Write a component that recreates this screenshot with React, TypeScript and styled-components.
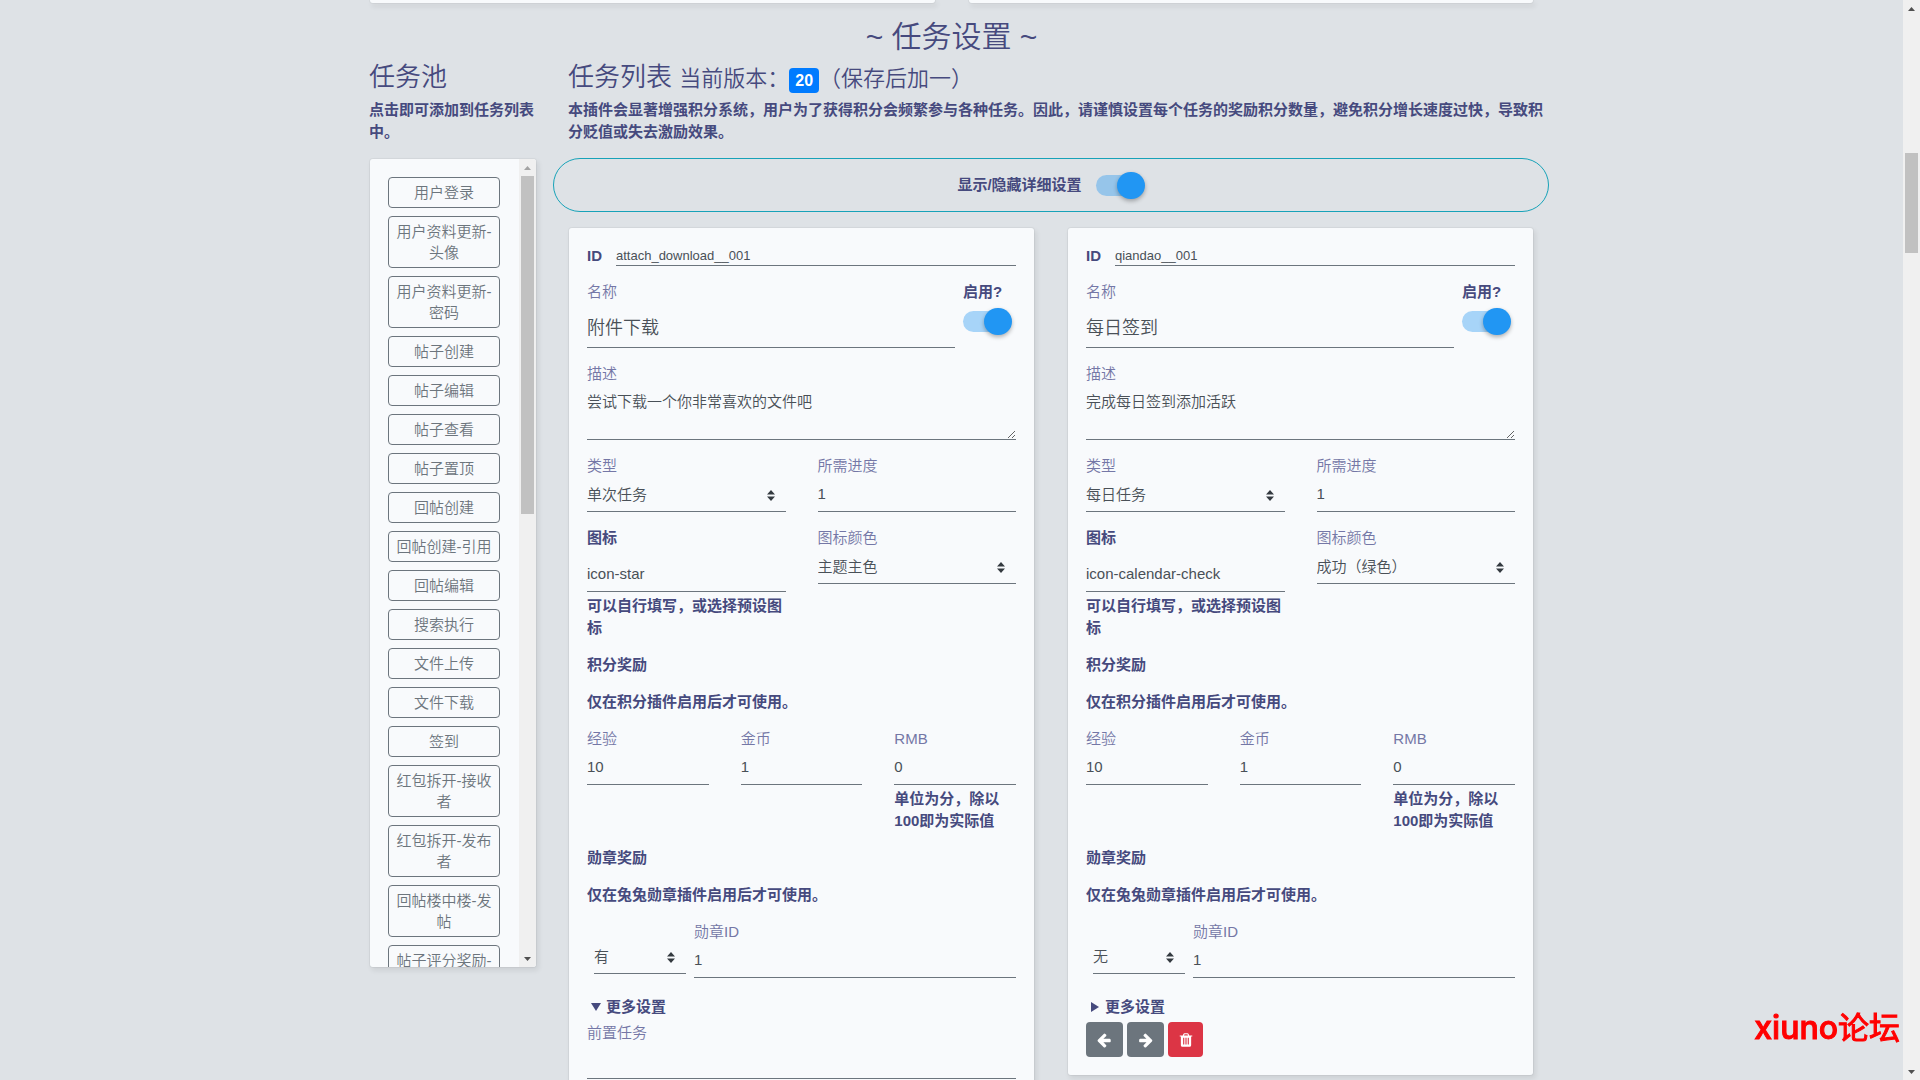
import React, { useId } from "react";
import styled, { createGlobalStyle, css } from "styled-components";

const color = {
  page: "#dee2e6",
  card: "#f8fafc",
  ink: "#464a7e",
  label: "#7477a6",
  field: "#495057",
  line: "#6c757d",
  info: "#17a2b8",
  primary: "#007bff",
  danger: "#dc3545",
  toggle: "#2196f3",
};

const GlobalStyle = createGlobalStyle`
  *, *::before, *::after { box-sizing: border-box; }
  body {
    margin: 0;
    background: ${color.page};
    color: ${color.ink};
    font-family: "Liberation Sans", "Noto Sans CJK SC", sans-serif;
    font-size: 15px;
    font-weight: 350;
    line-height: 22px;
  }
  button, input, select, textarea { font: inherit; color: inherit; }
  h2, h3, p { margin: 0; font-weight: 350; }
`;

/* ---------- page frame ---------- */

const Shell = styled.div`
  display: flex;
  height: 100vh;
  overflow: hidden;
`;

const Main = styled.main`
  flex: 1;
  min-width: 0;
  overflow: hidden;
`;

const Container = styled.div`
  max-width: 1165px;
  margin: 0 auto;
`;

const surface = css`
  background: ${color.card};
  border: 1px solid rgba(0, 0, 0, 0.04);
  background-clip: padding-box;
  border-radius: 4px;
  box-shadow: 2px 3px 5px rgba(0, 0, 0, 0.07);
`;

const PreviousPanels = styled.div`
  display: grid;
  grid-template-columns: 1fr 1fr;
  gap: 32px;
`;

const PanelEdge = styled.div`
  ${surface}
  height: 4px;
  border-top: 0;
  border-radius: 0 0 4px 4px;
`;

const PageTitle = styled.h2`
  margin: 15px 0 7px;
  font-size: 30px;
  line-height: 36px;
  text-align: center;
`;

const Columns = styled.div`
  display: grid;
  grid-template-columns: 168px minmax(0, 1fr);
  gap: 31px;
  align-items: start;
`;

const ColumnTitle = styled.h3`
  height: 30px;
  margin-bottom: 7px;
  font-size: 26px;
  line-height: 30px;
  white-space: nowrap;
`;

const Version = styled.small`
  font-size: 22px;
`;

const Badge = styled.span`
  display: inline-block;
  padding: 0 6px;
  border-radius: 4px;
  background: ${color.primary};
  color: #fff;
  font-size: 16px;
  font-weight: 700;
  line-height: 25px;
`;

const Intro = styled.p<{ $wide?: boolean }>`
  margin-bottom: 15px;
  margin-right: ${(p) => (p.$wide ? "-15px" : "0")};
  font-weight: 700;
`;

/* ---------- scroll bar ---------- */

const Track = styled.div`
  display: flex;
  flex-direction: column;
  flex: none;
  width: 17px;
  background: #f0f0f0;
`;

const ArrowCell = styled.div<{ $dim?: boolean }>`
  display: flex;
  align-items: center;
  justify-content: center;
  height: 17px;
  color: ${(p) => (p.$dim ? "#a3a3a3" : "#505050")};
`;

const Rail = styled.div`
  display: flex;
  flex-direction: column;
  flex: 1;
  padding: 0 2px;
`;

const RailSpace = styled.div<{ $part: number }>`
  flex: ${(p) => p.$part} 1 0;
`;

const Thumb = styled(RailSpace)`
  background: #c1c1c1;
`;

function ScrollBar({ before, size, after }: { before: number; size: number; after: number }) {
  return (
    <Track aria-hidden="true">
      <ArrowCell $dim={before === 0}>
        <svg width="7" height="4" viewBox="0 0 7 4" fill="currentColor">
          <path d="M0 4h7L3.500 0z" />
        </svg>
      </ArrowCell>
      <Rail>
        <RailSpace $part={before} />
        <Thumb $part={size} />
        <RailSpace $part={after} />
      </Rail>
      <ArrowCell>
        <svg width="7" height="4" viewBox="0 0 7 4" fill="currentColor">
          <path d="M0 0h7L3.500 4z" />
        </svg>
      </ArrowCell>
    </Track>
  );
}

/* ---------- task pool ---------- */

const Pool = styled.div`
  ${surface}
  display: flex;
  height: 75vh;
  overflow: hidden;
`;

const PoolList = styled.div`
  display: flex;
  flex: 1;
  flex-direction: column;
  gap: 8px;
  min-width: 0;
  padding: 18px 19px 0 18px;
  overflow: hidden;
`;

const PoolButton = styled.button`
  flex: none;
  padding: 4px 7px;
  border: 1px solid ${color.line};
  border-radius: 4px;
  background: transparent;
  color: ${color.line};
  line-height: 21px;
  cursor: pointer;
`;

/* ---------- switch ---------- */

const Toggle = styled.input`
  appearance: none;
  display: grid;
  align-items: center;
  width: 49px;
  height: 27px;
  margin: 0;
  cursor: pointer;

  &::before,
  &::after {
    content: "";
    grid-area: 1 / 1;
    border-radius: 14px;
  }
  &::before {
    width: 42px;
    height: 21px;
    background: rgba(0, 0, 0, 0.2);
  }
  &::after {
    width: 28px;
    height: 27px;
    background: #fafafa;
    box-shadow: 0 2px 4px rgba(0, 0, 0, 0.3);
  }
  &:checked::before {
    background: rgba(33, 150, 243, 0.38);
  }
  &:checked::after {
    justify-self: end;
    background: ${color.toggle};
  }
`;

const DetailSwitch = styled.label`
  display: flex;
  align-items: center;
  justify-content: center;
  gap: 14px;
  height: 54px;
  margin: 0 -15px 15px;
  border: 1px solid ${color.info};
  border-radius: 27px;
  font-weight: 700;
`;

/* ---------- task card ---------- */

const Cards = styled.div`
  display: grid;
  grid-template-columns: repeat(2, minmax(0, 1fr));
  gap: 32px;
  align-items: start;
`;

const Card = styled.form`
  ${surface}
  display: flex;
  flex-direction: column;
  gap: 15px;
  padding: 18px;
`;

const Row = styled.div<{ $columns: string; $gap?: number }>`
  display: grid;
  grid-template-columns: ${(p) => p.$columns};
  gap: ${(p) => p.$gap ?? 32}px;
  align-items: start;
`;

const IdRow = styled.div`
  display: flex;
  gap: 14px;
  height: 20px;
  line-height: 20px;
`;

const Group = styled.div<{ $inset?: boolean }>`
  display: flex;
  flex-direction: column;
  gap: 2px;
  min-width: 0;
  padding: ${(p) => (p.$inset ? "20px 0 0 7px" : "0")};
`;

const Label = styled.label<{ $strong?: boolean }>`
  color: ${(p) => (p.$strong ? color.ink : color.label)};
  font-weight: ${(p) => (p.$strong ? 700 : 350)};
`;

const SpacedLabel = styled(Label)`
  margin-bottom: 8px;
`;

const SwitchLabel = styled(Label)`
  margin-bottom: 3px;
`;

const field = css`
  display: block;
  width: 100%;
  min-width: 0;
  height: 33px;
  margin: 0;
  padding: 0;
  border: 0;
  border-bottom: 1px solid ${color.line};
  border-radius: 0;
  outline: 0;
  background: transparent;
  color: ${color.field};
`;

const Input = styled.input`
  ${field}
  padding-bottom: 3px;
`;

const IdInput = styled.input`
  ${field}
  height: 20px;
  font-size: 13px;
`;

const NameInput = styled.input`
  ${field}
  height: 43px;
  font-size: 18px;
`;

const TextArea = styled.textarea`
  ${field}
  height: 53px;
  padding: 4px 0;
  line-height: 22px;
  resize: vertical;
`;

const SelectBox = styled.div`
  display: grid;
  grid-template-columns: minmax(0, 1fr);
  align-items: center;

  > * {
    grid-area: 1 / 1;
  }
  > svg {
    justify-self: end;
    margin-right: 11px;
    pointer-events: none;
  }
`;

const NativeSelect = styled.select`
  ${field}
  appearance: none;
`;

const Help = styled.p`
  padding-top: 1px;
  font-weight: 700;
`;

const SectionText = styled.p`
  font-weight: 700;
`;

const More = styled.details`
  padding-top: 3px;
`;

const MoreBody = styled.div`
  padding-bottom: 15px;
`;

const Summary = styled.summary`
  display: flex;
  align-items: center;
  gap: 5px;
  margin-bottom: 4px;
  padding-left: 4px;
  font-weight: 700;
  list-style: none;
  cursor: pointer;

  > svg {
    transform: rotate(-90deg);
  }
  details[open] > & > svg {
    transform: none;
  }
`;

const Actions = styled.div`
  display: flex;
  gap: 4px;
  margin-top: -15px;
`;

const ActionButton = styled.button<{ $danger?: boolean }>`
  display: flex;
  align-items: center;
  justify-content: center;
  width: ${(p) => (p.$danger ? 35 : 37)}px;
  height: 35px;
  padding: 0;
  border: 0;
  border-radius: 4px;
  background: ${(p) => (p.$danger ? color.danger : color.line)};
  color: #fff;
  cursor: pointer;
`;

/* ---------- watermark ---------- */

const Watermark = styled.div`
  position: fixed;
  right: 20px;
  bottom: 32px;
  color: #f00;
  font-family: Inter, "Noto Sans CJK SC", sans-serif;
  font-size: 32px;
  font-weight: 500;
  line-height: 40px;
  -webkit-text-stroke: 1px #f00;
`;

const WatermarkSuffix = styled.span`
  font-size: 31px;
  font-weight: 400;
`;

/* ---------- pieces ---------- */

const glyphs = {
  left: "M1536 896v128q0 53-32.500 90.500t-84.500 37.500h-704l293 294q38 36 38 90t-38 90l-75 76q-37 37-90 37-52 0-91-37l-651-652q-37-37-37-90 0-52 37-91l651-650q38-38 91-38 52 0 90 38l75 74q38 38 38 91t-38 91l-293 293h704q52 0 84.500 37.500t32.500 90.500z",
  right: "M1600 960q0 54-37 91l-651 651q-39 37-91 37-51 0-90-37l-75-75q-38-38-38-91t38-91l293-293h-704q-52 0-84.500-37.500t-32.500-90.500v-128q0-53 32.500-90.500t84.500-37.500h704l-293-294q-38-36-38-90t38-90l75-75q38-38 90-38 53 0 91 38l651 651q37 35 37 90z",
  trash: "M704 1376v-704q0-14-9-23t-23-9h-64q-14 0-23 9t-9 23v704q0 14 9 23t23 9h64q14 0 23-9t9-23zm256 0v-704q0-14-9-23t-23-9h-64q-14 0-23 9t-9 23v704q0 14 9 23t23 9h64q14 0 23-9t9-23zm256 0v-704q0-14-9-23t-23-9h-64q-14 0-23 9t-9 23v704q0 14 9 23t23 9h64q14 0 23-9t9-23zm-544-992h448l-48-117q-7-9-17-11h-317q-10 2-17 11zm928 32v64q0 14-9 23t-23 9h-96v948q0 83-47 143.500t-113 60.500h-832q-66 0-113-58.500t-47-141.500v-952h-96q-14 0-23-9t-9-23v-64q0-14 9-23t23-9h309l70-167q15-37 54-63t79-26h320q40 0 79 26t54 63l70 167h309q14 0 23 9t9 23z",
};

function Glyph({ name }: { name: keyof typeof glyphs }) {
  return (
    <svg width="16" height="16" viewBox="0 0 1792 1792" fill="currentColor" aria-hidden="true">
      <path d={glyphs[name]} />
    </svg>
  );
}

function Select({ id, value, label }: { id: string; value: string; label?: string }) {
  return (
    <SelectBox>
      <NativeSelect id={id} defaultValue={value} aria-label={label}>
        <option>{value}</option>
      </NativeSelect>
      <svg width="8" height="11" viewBox="0 0 8 11" fill="#343a40" aria-hidden="true">
        <path d="M0 4.500 4 0l4 4.500zM0 6.500h8L4 11z" />
      </svg>
    </SelectBox>
  );
}

function TextField({ label, value, help }: { label: string; value: string; help?: string }) {
  const id = useId();
  return (
    <Group>
      <Label htmlFor={id}>{label}</Label>
      <Input id={id} defaultValue={value} />
      {help && <Help>{help}</Help>}
    </Group>
  );
}

function SelectField({ label, value }: { label: string; value: string }) {
  const id = useId();
  return (
    <Group>
      <Label htmlFor={id}>{label}</Label>
      <Select id={id} value={value} />
    </Group>
  );
}

interface Task {
  id: string;
  name: string;
  description: string;
  type: string;
  icon: string;
  iconColor: string;
  medal: string;
  open: boolean;
}

function TaskCard({ task }: { task: Task }) {
  const key = useId();
  return (
    <Card>
      <IdRow>
        <Label $strong htmlFor={key + "id"}>ID</Label>
        <IdInput id={key + "id"} defaultValue={task.id} />
      </IdRow>
      <Row $columns="minmax(0, 1fr) 53px" $gap={8}>
        <Group>
          <Label htmlFor={key + "name"}>名称</Label>
          <NameInput id={key + "name"} defaultValue={task.name} />
        </Group>
        <Group>
          <SwitchLabel $strong htmlFor={key + "on"}>启用?</SwitchLabel>
          <Toggle id={key + "on"} type="checkbox" defaultChecked />
        </Group>
      </Row>
      <Group>
        <Label htmlFor={key + "desc"}>描述</Label>
        <TextArea id={key + "desc"} defaultValue={task.description} />
      </Group>
      <Row $columns="repeat(2, minmax(0, 1fr))">
        <SelectField label="类型" value={task.type} />
        <TextField label="所需进度" value="1" />
      </Row>
      <Row $columns="repeat(2, minmax(0, 1fr))">
        <Group>
          <SpacedLabel $strong htmlFor={key + "icon"}>图标</SpacedLabel>
          <Input id={key + "icon"} defaultValue={task.icon} />
          <Help>可以自行填写，或选择预设图标</Help>
        </Group>
        <SelectField label="图标颜色" value={task.iconColor} />
      </Row>
      <SectionText>积分奖励</SectionText>
      <SectionText>仅在积分插件启用后才可使用。</SectionText>
      <Row $columns="repeat(3, minmax(0, 1fr))">
        <TextField label="经验" value="10" />
        <TextField label="金币" value="1" />
        <TextField label="RMB" value="0" help="单位为分，除以100即为实际值" />
      </Row>
      <SectionText>勋章奖励</SectionText>
      <SectionText>仅在兔兔勋章插件启用后才可使用。</SectionText>
      <Row $columns="99px minmax(0, 1fr)" $gap={8}>
        <Group $inset>
          <Select id={key + "medal"} value={task.medal} label="勋章奖励" />
        </Group>
        <TextField label="勋章ID" value="1" />
      </Row>
      <More open={task.open}>
        <Summary>
          <svg width="10" height="8" viewBox="0 0 10 8" fill="currentColor" aria-hidden="true">
            <path d="M0 0h10L5 8z" />
          </svg>
          更多设置
        </Summary>
        <MoreBody>
          <TextField label="前置任务" value="" />
        </MoreBody>
      </More>
      <Actions>
        <ActionButton type="button" aria-label="前移"><Glyph name="left" /></ActionButton>
        <ActionButton type="button" aria-label="后移"><Glyph name="right" /></ActionButton>
        <ActionButton type="button" aria-label="删除" $danger><Glyph name="trash" /></ActionButton>
      </Actions>
    </Card>
  );
}

const poolItems = [
  "用户登录", "用户资料更新-头像", "用户资料更新-密码", "帖子创建", "帖子编辑", "帖子查看",
  "帖子置顶", "回帖创建", "回帖创建-引用", "回帖编辑", "搜索执行", "文件上传", "文件下载",
  "签到", "红包拆开-接收者", "红包拆开-发布者", "回帖楼中楼-发帖", "帖子评分奖励-",
];

const tasks: Task[] = [
  {
    id: "attach_download__001",
    name: "附件下载",
    description: "尝试下载一个你非常喜欢的文件吧",
    type: "单次任务",
    icon: "icon-star",
    iconColor: "主题主色",
    medal: "有",
    open: true,
  },
  {
    id: "qiandao__001",
    name: "每日签到",
    description: "完成每日签到添加活跃",
    type: "每日任务",
    icon: "icon-calendar-check",
    iconColor: "成功（绿色）",
    medal: "无",
    open: false,
  },
];

export default function App() {
  return (
    <Shell>
      <GlobalStyle />
      <Main>
        <Container>
          <PreviousPanels>
            <PanelEdge />
            <PanelEdge />
          </PreviousPanels>
          <PageTitle>~ 任务设置 ~</PageTitle>
          <Columns>
            <section>
              <ColumnTitle>任务池</ColumnTitle>
              <Intro>点击即可添加到任务列表中。</Intro>
              <Pool>
                <PoolList>
                  {poolItems.map((item) => (
                    <PoolButton key={item} type="button">{item}</PoolButton>
                  ))}
                </PoolList>
                <ScrollBar before={0} size={338} after={436} />
              </Pool>
            </section>
            <section>
              <ColumnTitle>
                任务列表 <Version>当前版本：<Badge>20</Badge>（保存后加一）</Version>
              </ColumnTitle>
              <Intro $wide>
                本插件会显著增强积分系统，用户为了获得积分会频繁参与各种任务。因此，请谨慎设置每个任务的奖励积分数量，避免积分增长速度过快，导致积分贬值或失去激励效果。
              </Intro>
              <DetailSwitch>
                显示/隐藏详细设置
                <Toggle type="checkbox" defaultChecked />
              </DetailSwitch>
              <Cards>
                {tasks.map((task) => (
                  <TaskCard key={task.id} task={task} />
                ))}
              </Cards>
            </section>
          </Columns>
        </Container>
      </Main>
      <ScrollBar before={136} size={100} after={810} />
      <Watermark>xiuno<WatermarkSuffix>论坛</WatermarkSuffix></Watermark>
    </Shell>
  );
}
